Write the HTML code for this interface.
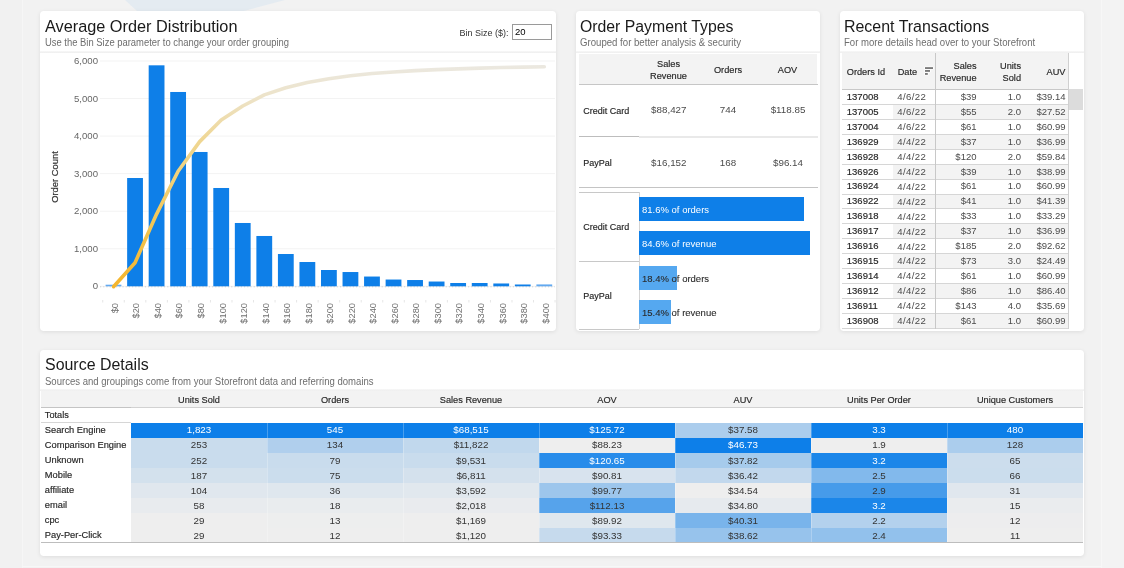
<!DOCTYPE html><html><head><meta charset="utf-8"><style>

*{box-sizing:border-box;margin:0;padding:0}
html,body{width:1124px;height:568px;overflow:hidden;background:#f2f2f2;font-family:"Liberation Sans", sans-serif;}
#w{position:absolute;left:0;top:0;width:1124px;height:568px;will-change:transform}
.a{position:absolute;white-space:nowrap}
.card{position:absolute;background:#fff;border-radius:4px;box-shadow:0 1px 4px rgba(0,0,0,0.09)}
.title{position:absolute;font-size:16px;color:#1a1a1a;line-height:16px;white-space:nowrap}
.sub{position:absolute;font-size:10px;color:#6e6e6e;line-height:10px;white-space:nowrap;transform:scaleX(0.95);transform-origin:0 0}
.sep{position:absolute;height:2px;background:linear-gradient(#f8f8f8,#eeeeee)}

</style></head><body><div id="w">
<svg class="a" style="left:0;top:0" width="1124" height="568"><polygon points="125,0 285,0 244,11 137,11" fill="#e4ebf1"/><rect x="0" y="0" width="22" height="568" fill="#f1f1f1"/><rect x="1102" y="0" width="22" height="568" fill="#f3f3f3"/><rect x="22" y="0" width="1" height="568" fill="#f6f6f6"/><rect x="1101" y="0" width="1" height="568" fill="#f7f7f7"/><rect x="22" y="566" width="1080" height="1" fill="#f7f7f7"/></svg>
<div class="card" style="left:40px;top:11px;width:516px;height:319.7px"></div>
<div class="card" style="left:576px;top:11px;width:244px;height:319.7px"></div>
<div class="card" style="left:840px;top:11px;width:244px;height:319.7px"></div>
<div class="card" style="left:40px;top:349.5px;width:1044px;height:206.2px"></div>
<div class="title" style="left:45px;top:18px;font-size:16.3px">Average Order Distribution</div>
<div class="sub" style="left:45px;top:38px;transform:scaleX(0.942)">Use the Bin Size parameter to change your order grouping</div>
<div class="sep" style="left:40px;top:51px;width:516px"></div>
<div class="title" style="left:580px;top:19px;font-size:15.8px">Order Payment Types</div>
<div class="sub" style="left:580px;top:38px;transform:scaleX(0.962)">Grouped for better analysis &amp; security</div>
<div class="sep" style="left:576px;top:51px;width:244px"></div>
<div class="title" style="left:844px;top:19px;font-size:15.95px">Recent Transactions</div>
<div class="sub" style="left:844px;top:38px;transform:scaleX(0.958)">For more details head over to your Storefront</div>
<div class="sep" style="left:840px;top:51px;width:244px"></div>
<div class="title" style="left:45px;top:357px;font-size:15.95px">Source Details</div>
<div class="sub" style="left:45px;top:376.5px;transform:scaleX(0.955)">Sources and groupings come from your Storefront data and referring domains</div>
<div class="sep" style="left:40px;top:389px;width:1044px"></div>
<div class="a" style="left:459.5px;top:27.5px;font-size:9px;color:#333;line-height:10px">Bin Size ($):</div>
<div class="a" style="left:512px;top:24px;width:40px;height:16px;border:1px solid #9a9a9a;background:#fff;font-size:9.5px;line-height:13px;padding-left:2px;color:#000">20</div>
<svg class="a" style="left:0;top:0" width="1124" height="568"><defs><linearGradient id="lg" gradientUnits="userSpaceOnUse" x1="0" y1="286" x2="0" y2="66"><stop offset="0" stop-color="#f5b52c"/><stop offset="0.25" stop-color="#f3c44f"/><stop offset="0.51" stop-color="#f1d27c"/><stop offset="0.66" stop-color="#efd692"/><stop offset="0.855" stop-color="#ede3c8"/><stop offset="1" stop-color="#ebe8e0"/></linearGradient></defs><rect x="100" y="285.80" width="455" height="1" fill="#f3f3f3"/><text x="98" y="289.30" font-size="9.6" fill="#666" text-anchor="end" font-family="Liberation Sans">0</text><rect x="100" y="248.25" width="455" height="1" fill="#f3f3f3"/><text x="98" y="251.75" font-size="9.6" fill="#666" text-anchor="end" font-family="Liberation Sans">1,000</text><rect x="100" y="210.70" width="455" height="1" fill="#f3f3f3"/><text x="98" y="214.20" font-size="9.6" fill="#666" text-anchor="end" font-family="Liberation Sans">2,000</text><rect x="100" y="173.15" width="455" height="1" fill="#f3f3f3"/><text x="98" y="176.65" font-size="9.6" fill="#666" text-anchor="end" font-family="Liberation Sans">3,000</text><rect x="100" y="135.60" width="455" height="1" fill="#f3f3f3"/><text x="98" y="139.10" font-size="9.6" fill="#666" text-anchor="end" font-family="Liberation Sans">4,000</text><rect x="100" y="98.05" width="455" height="1" fill="#f3f3f3"/><text x="98" y="101.55" font-size="9.6" fill="#666" text-anchor="end" font-family="Liberation Sans">5,000</text><rect x="100" y="60.50" width="455" height="1" fill="#f3f3f3"/><text x="98" y="64.00" font-size="9.6" fill="#666" text-anchor="end" font-family="Liberation Sans">6,000</text><line x1="100" y1="286.8" x2="555" y2="286.8" stroke="#d0d0d0" stroke-width="1" stroke-dasharray="1.2,2"/><rect x="102.23" y="300" width="1" height="2.5" fill="#e6e6e6"/><rect x="123.77" y="300" width="1" height="2.5" fill="#e6e6e6"/><rect x="145.31" y="300" width="1" height="2.5" fill="#e6e6e6"/><rect x="166.85" y="300" width="1" height="2.5" fill="#e6e6e6"/><rect x="188.39" y="300" width="1" height="2.5" fill="#e6e6e6"/><rect x="209.93" y="300" width="1" height="2.5" fill="#e6e6e6"/><rect x="231.47" y="300" width="1" height="2.5" fill="#e6e6e6"/><rect x="253.01" y="300" width="1" height="2.5" fill="#e6e6e6"/><rect x="274.55" y="300" width="1" height="2.5" fill="#e6e6e6"/><rect x="296.09" y="300" width="1" height="2.5" fill="#e6e6e6"/><rect x="317.63" y="300" width="1" height="2.5" fill="#e6e6e6"/><rect x="339.17" y="300" width="1" height="2.5" fill="#e6e6e6"/><rect x="360.71" y="300" width="1" height="2.5" fill="#e6e6e6"/><rect x="382.25" y="300" width="1" height="2.5" fill="#e6e6e6"/><rect x="403.79" y="300" width="1" height="2.5" fill="#e6e6e6"/><rect x="425.33" y="300" width="1" height="2.5" fill="#e6e6e6"/><rect x="446.87" y="300" width="1" height="2.5" fill="#e6e6e6"/><rect x="468.41" y="300" width="1" height="2.5" fill="#e6e6e6"/><rect x="489.95" y="300" width="1" height="2.5" fill="#e6e6e6"/><rect x="511.49" y="300" width="1" height="2.5" fill="#e6e6e6"/><rect x="533.03" y="300" width="1" height="2.5" fill="#e6e6e6"/><rect x="554.57" y="300" width="1" height="2.5" fill="#e6e6e6"/><rect x="105.60" y="284.70" width="15.8" height="1.60" fill="#62a9f0"/><text transform="translate(117.80,303) rotate(-90)" font-size="9.3" fill="#707070" text-anchor="end" font-family="Liberation Sans">$0</text><rect x="127.14" y="178.01" width="15.8" height="108.29" fill="#0e7fe8"/><text transform="translate(139.34,303) rotate(-90)" font-size="9.3" fill="#707070" text-anchor="end" font-family="Liberation Sans">$20</text><rect x="148.68" y="65.32" width="15.8" height="220.98" fill="#0e7fe8"/><text transform="translate(160.88,303) rotate(-90)" font-size="9.3" fill="#707070" text-anchor="end" font-family="Liberation Sans">$40</text><rect x="170.22" y="91.98" width="15.8" height="194.32" fill="#0e7fe8"/><text transform="translate(182.42,303) rotate(-90)" font-size="9.3" fill="#707070" text-anchor="end" font-family="Liberation Sans">$60</text><rect x="191.76" y="151.98" width="15.8" height="134.32" fill="#0e7fe8"/><text transform="translate(203.96,303) rotate(-90)" font-size="9.3" fill="#707070" text-anchor="end" font-family="Liberation Sans">$80</text><rect x="213.30" y="187.99" width="15.8" height="98.31" fill="#0e7fe8"/><text transform="translate(225.50,303) rotate(-90)" font-size="9.3" fill="#707070" text-anchor="end" font-family="Liberation Sans">$100</text><rect x="234.84" y="222.99" width="15.8" height="63.31" fill="#0e7fe8"/><text transform="translate(247.04,303) rotate(-90)" font-size="9.3" fill="#707070" text-anchor="end" font-family="Liberation Sans">$120</text><rect x="256.38" y="235.98" width="15.8" height="50.32" fill="#0e7fe8"/><text transform="translate(268.58,303) rotate(-90)" font-size="9.3" fill="#707070" text-anchor="end" font-family="Liberation Sans">$140</text><rect x="277.92" y="254.01" width="15.8" height="32.29" fill="#0e7fe8"/><text transform="translate(290.12,303) rotate(-90)" font-size="9.3" fill="#707070" text-anchor="end" font-family="Liberation Sans">$160</text><rect x="299.46" y="262.01" width="15.8" height="24.29" fill="#0e7fe8"/><text transform="translate(311.66,303) rotate(-90)" font-size="9.3" fill="#707070" text-anchor="end" font-family="Liberation Sans">$180</text><rect x="321.00" y="270.00" width="15.8" height="16.30" fill="#0e7fe8"/><text transform="translate(333.20,303) rotate(-90)" font-size="9.3" fill="#707070" text-anchor="end" font-family="Liberation Sans">$200</text><rect x="342.54" y="272.03" width="15.8" height="14.27" fill="#0e7fe8"/><text transform="translate(354.74,303) rotate(-90)" font-size="9.3" fill="#707070" text-anchor="end" font-family="Liberation Sans">$220</text><rect x="364.08" y="276.54" width="15.8" height="9.76" fill="#0e7fe8"/><text transform="translate(376.28,303) rotate(-90)" font-size="9.3" fill="#707070" text-anchor="end" font-family="Liberation Sans">$240</text><rect x="385.62" y="279.54" width="15.8" height="6.76" fill="#0e7fe8"/><text transform="translate(397.82,303) rotate(-90)" font-size="9.3" fill="#707070" text-anchor="end" font-family="Liberation Sans">$260</text><rect x="407.16" y="280.03" width="15.8" height="6.27" fill="#0e7fe8"/><text transform="translate(419.36,303) rotate(-90)" font-size="9.3" fill="#707070" text-anchor="end" font-family="Liberation Sans">$280</text><rect x="428.70" y="281.53" width="15.8" height="4.77" fill="#0e7fe8"/><text transform="translate(440.90,303) rotate(-90)" font-size="9.3" fill="#707070" text-anchor="end" font-family="Liberation Sans">$300</text><rect x="450.24" y="283.00" width="15.8" height="3.30" fill="#0e7fe8"/><text transform="translate(462.44,303) rotate(-90)" font-size="9.3" fill="#707070" text-anchor="end" font-family="Liberation Sans">$320</text><rect x="471.78" y="283.00" width="15.8" height="3.30" fill="#0e7fe8"/><text transform="translate(483.98,303) rotate(-90)" font-size="9.3" fill="#707070" text-anchor="end" font-family="Liberation Sans">$340</text><rect x="493.32" y="283.48" width="15.8" height="2.82" fill="#0e7fe8"/><text transform="translate(505.52,303) rotate(-90)" font-size="9.3" fill="#707070" text-anchor="end" font-family="Liberation Sans">$360</text><rect x="514.86" y="284.50" width="15.8" height="1.80" fill="#0e7fe8"/><text transform="translate(527.06,303) rotate(-90)" font-size="9.3" fill="#707070" text-anchor="end" font-family="Liberation Sans">$380</text><rect x="536.40" y="284.42" width="15.8" height="1.88" fill="#62a9f0"/><text transform="translate(548.60,303) rotate(-90)" font-size="9.3" fill="#707070" text-anchor="end" font-family="Liberation Sans">$400</text><polyline points="113.50,286.70 135.04,262.82 156.58,214.09 178.12,171.24 199.66,141.62 221.20,119.94 242.74,105.98 264.28,94.89 285.82,87.77 307.36,82.41 328.90,78.81 350.44,75.67 371.98,73.51 393.52,72.02 415.06,70.64 436.60,69.59 458.14,68.86 479.68,68.13 501.22,67.51 522.76,67.11 544.30,66.70" fill="none" stroke="url(#lg)" stroke-width="3.6" stroke-linejoin="round" stroke-linecap="round"/><text transform="translate(57.5,177) rotate(-90)" font-size="9.4" fill="#333" stroke="#333" stroke-width="0.2" text-anchor="middle" font-family="Liberation Sans">Order Count</text></svg>
<div class="a" style="left:579px;top:54px;width:237.8px;height:30px;background:#f3f3f3;"></div>
<div class="a" style="left:579px;top:84px;width:238.5px;height:1px;background:#c6c6c6;"></div>
<div class="a" style="left:608.5px;width:120px;text-align:center;top:58px;line-height:12px;font-size:9.2px;color:#222;-webkit-text-stroke:0.17px #333;">Sales</div>
<div class="a" style="left:608.5px;width:120px;text-align:center;top:69.7px;line-height:12px;font-size:9.2px;color:#222;-webkit-text-stroke:0.17px #333;">Revenue</div>
<div class="a" style="left:668px;width:120px;text-align:center;top:63.8px;line-height:12px;font-size:9.2px;color:#222;-webkit-text-stroke:0.17px #333;">Orders</div>
<div class="a" style="left:727.5px;width:120px;text-align:center;top:63.8px;line-height:12px;font-size:9.2px;color:#222;-webkit-text-stroke:0.17px #333;">AOV</div>
<div class="a" style="left:583.3px;top:104.6px;line-height:12px;font-size:9.0px;color:#222;-webkit-text-stroke:0.17px #333;">Credit Card</div>
<div class="a" style="left:608.8px;width:120px;text-align:center;top:104.3px;line-height:12px;font-size:9.8px;color:#4a4a4a;">$88,427</div>
<div class="a" style="left:668px;width:120px;text-align:center;top:104.3px;line-height:12px;font-size:9.8px;color:#4a4a4a;">744</div>
<div class="a" style="left:728px;width:120px;text-align:center;top:104.3px;line-height:12px;font-size:9.8px;color:#4a4a4a;">$118.85</div>
<div class="a" style="left:579px;top:136px;width:60px;height:1px;background:#bdbdbd;"></div>
<div class="a" style="left:639px;top:136px;width:178.5px;height:1.5px;background:#e9e9e9;"></div>
<div class="a" style="left:583.3px;top:157px;line-height:12px;font-size:9.0px;color:#222;-webkit-text-stroke:0.17px #333;">PayPal</div>
<div class="a" style="left:608.8px;width:120px;text-align:center;top:156.7px;line-height:12px;font-size:9.8px;color:#4a4a4a;">$16,152</div>
<div class="a" style="left:668px;width:120px;text-align:center;top:156.7px;line-height:12px;font-size:9.8px;color:#4a4a4a;">168</div>
<div class="a" style="left:728px;width:120px;text-align:center;top:156.7px;line-height:12px;font-size:9.8px;color:#4a4a4a;">$96.14</div>
<div class="a" style="left:579px;top:187px;width:238.5px;height:1px;background:#c4c4c4;"></div>
<div class="a" style="left:579px;top:192.3px;width:60px;height:1px;background:#c8c8c8;"></div>
<div class="a" style="left:639px;top:192.3px;width:1px;height:137px;background:#d4d4d4;"></div>
<div class="a" style="left:579px;top:260.8px;width:60px;height:1px;background:#c8c8c8;"></div>
<div class="a" style="left:579px;top:329px;width:60px;height:1px;background:#c8c8c8;"></div>
<div class="a" style="left:583.3px;top:220.6px;line-height:12px;font-size:9.0px;color:#222;-webkit-text-stroke:0.17px #333;">Credit Card</div>
<div class="a" style="left:583.3px;top:289.6px;line-height:12px;font-size:9.0px;color:#222;-webkit-text-stroke:0.17px #333;">PayPal</div>
<div class="a" style="left:639px;top:197.2px;width:165px;height:23.8px;background:#0e7fe8;"></div>
<div class="a" style="left:639px;top:231.3px;width:171px;height:23.8px;background:#0e7fe8;"></div>
<div class="a" style="left:639px;top:266px;width:37.5px;height:23.8px;background:#55a8f0;"></div>
<div class="a" style="left:639px;top:300.1px;width:31.6px;height:23.8px;background:#55a8f0;"></div>
<div class="a" style="left:642px;top:204.2px;line-height:12px;font-size:9.5px;color:#fff;">81.6% of orders</div>
<div class="a" style="left:642px;top:238.2px;line-height:12px;font-size:9.5px;color:#fff;">84.6% of revenue</div>
<div class="a" style="left:642px;top:272.9px;line-height:12px;font-size:9.5px;color:#2a2a2a;-webkit-text-stroke:0.1px #2a2a2a;">18.4% of orders</div>
<div class="a" style="left:642px;top:307px;line-height:12px;font-size:9.5px;color:#2a2a2a;-webkit-text-stroke:0.1px #2a2a2a;">15.4% of revenue</div>
<div class="a" style="left:842px;top:53px;width:226.5px;height:36.5px;background:#f3f3f3;"></div>
<div class="a" style="left:842px;top:89px;width:226.5px;height:1px;background:#c8c8c8;"></div>
<div class="a" style="left:935.2px;top:53px;width:1px;height:276px;background:#c8c8c8;"></div>
<div class="a" style="left:1067.5px;top:53px;width:1px;height:276px;background:#d0d0d0;"></div>
<div class="a" style="left:846.8px;top:66px;line-height:12px;font-size:9.2px;color:#222;-webkit-text-stroke:0.17px #333;">Orders Id</div>
<div class="a" style="left:897.7px;top:66px;line-height:12px;font-size:9.2px;color:#222;-webkit-text-stroke:0.17px #333;">Date</div>
<svg class="a" style="left:923px;top:65px" width="12" height="12"><g stroke="#fff" stroke-width="1.6" stroke-linejoin="round" fill="#fff" opacity="0.9"><rect x="2" y="2.3" width="8" height="1.5"/><rect x="2" y="5.2" width="5" height="1.5"/><rect x="2" y="8.2" width="2.8" height="1.5"/></g><rect x="2" y="2.3" width="8" height="1.5" fill="#5a5a5a"/><rect x="2" y="5.2" width="5" height="1.5" fill="#5a5a5a"/><rect x="2" y="8.2" width="2.8" height="1.5" fill="#5a5a5a"/></svg>
<div class="a" style="left:856.5px;width:120px;text-align:right;top:59.900000000000006px;line-height:12px;font-size:9.2px;color:#222;-webkit-text-stroke:0.17px #333;">Sales</div>
<div class="a" style="left:856.5px;width:120px;text-align:right;top:71.9px;line-height:12px;font-size:9.2px;color:#222;-webkit-text-stroke:0.17px #333;">Revenue</div>
<div class="a" style="left:901px;width:120px;text-align:right;top:59.900000000000006px;line-height:12px;font-size:9.2px;color:#222;-webkit-text-stroke:0.17px #333;">Units</div>
<div class="a" style="left:901px;width:120px;text-align:right;top:71.9px;line-height:12px;font-size:9.2px;color:#222;-webkit-text-stroke:0.17px #333;">Sold</div>
<div class="a" style="left:945.5px;width:120px;text-align:right;top:66px;line-height:12px;font-size:9.2px;color:#222;-webkit-text-stroke:0.17px #333;">AUV</div>
<div class="a" style="left:1068.8px;top:89.3px;width:14.2px;height:20.7px;background:#dcdcdc;"></div>
<div class="a" style="left:893px;top:104.43px;width:174.5px;height:14.93px;background:#f3f3f3;"></div>
<div class="a" style="left:893px;top:134.29px;width:174.5px;height:14.93px;background:#f3f3f3;"></div>
<div class="a" style="left:893px;top:164.15px;width:174.5px;height:14.93px;background:#f3f3f3;"></div>
<div class="a" style="left:893px;top:194.01px;width:174.5px;height:14.93px;background:#f3f3f3;"></div>
<div class="a" style="left:893px;top:223.87px;width:174.5px;height:14.93px;background:#f3f3f3;"></div>
<div class="a" style="left:893px;top:253.73px;width:174.5px;height:14.93px;background:#f3f3f3;"></div>
<div class="a" style="left:893px;top:283.59000000000003px;width:174.5px;height:14.93px;background:#f3f3f3;"></div>
<div class="a" style="left:893px;top:313.45px;width:174.5px;height:14.93px;background:#f3f3f3;"></div>
<div class="a" style="left:842px;top:103.93px;width:225.5px;height:1px;background:#d6d6d6;"></div>
<div class="a" style="left:842px;top:118.86000000000001px;width:225.5px;height:1px;background:#d6d6d6;"></div>
<div class="a" style="left:842px;top:133.79px;width:225.5px;height:1px;background:#d6d6d6;"></div>
<div class="a" style="left:842px;top:148.72px;width:225.5px;height:1px;background:#d6d6d6;"></div>
<div class="a" style="left:842px;top:163.65px;width:225.5px;height:1px;background:#d6d6d6;"></div>
<div class="a" style="left:842px;top:178.58px;width:225.5px;height:1px;background:#d6d6d6;"></div>
<div class="a" style="left:842px;top:193.51px;width:225.5px;height:1px;background:#d6d6d6;"></div>
<div class="a" style="left:842px;top:208.44px;width:225.5px;height:1px;background:#d6d6d6;"></div>
<div class="a" style="left:842px;top:223.37px;width:225.5px;height:1px;background:#d6d6d6;"></div>
<div class="a" style="left:842px;top:238.3px;width:225.5px;height:1px;background:#d6d6d6;"></div>
<div class="a" style="left:842px;top:253.23000000000002px;width:225.5px;height:1px;background:#d6d6d6;"></div>
<div class="a" style="left:842px;top:268.15999999999997px;width:225.5px;height:1px;background:#d6d6d6;"></div>
<div class="a" style="left:842px;top:283.09px;width:225.5px;height:1px;background:#d6d6d6;"></div>
<div class="a" style="left:842px;top:298.02000000000004px;width:225.5px;height:1px;background:#d6d6d6;"></div>
<div class="a" style="left:842px;top:312.95px;width:225.5px;height:1px;background:#d6d6d6;"></div>
<div class="a" style="left:842px;top:327.88px;width:225.5px;height:1px;background:#d6d6d6;"></div>
<div class="a" style="left:935.2px;top:53px;width:1px;height:276px;background:#c8c8c8;"></div>
<div class="a" style="left:1067.5px;top:53px;width:1px;height:276px;background:#d0d0d0;"></div>
<div class="a" style="left:846.8px;top:90.9px;line-height:12px;font-size:9.5px;color:#1a1a1a;-webkit-text-stroke:0.17px #333;">137008</div>
<div class="a" style="left:897.3px;top:91.2px;line-height:12px;font-size:9.6px;color:#4a4a4a;letter-spacing:0.35px;">4/6/22</div>
<div class="a" style="left:856.5px;width:120px;text-align:right;top:90.9px;line-height:12px;font-size:9.5px;color:#4a4a4a;">$39</div>
<div class="a" style="left:901px;width:120px;text-align:right;top:90.9px;line-height:12px;font-size:9.5px;color:#4a4a4a;">1.0</div>
<div class="a" style="left:945.5px;width:120px;text-align:right;top:90.9px;line-height:12px;font-size:9.5px;color:#4a4a4a;">$39.14</div>
<div class="a" style="left:846.8px;top:105.83000000000001px;line-height:12px;font-size:9.5px;color:#1a1a1a;-webkit-text-stroke:0.17px #333;">137005</div>
<div class="a" style="left:897.3px;top:106.13000000000001px;line-height:12px;font-size:9.6px;color:#4a4a4a;letter-spacing:0.35px;">4/6/22</div>
<div class="a" style="left:856.5px;width:120px;text-align:right;top:105.83000000000001px;line-height:12px;font-size:9.5px;color:#4a4a4a;">$55</div>
<div class="a" style="left:901px;width:120px;text-align:right;top:105.83000000000001px;line-height:12px;font-size:9.5px;color:#4a4a4a;">2.0</div>
<div class="a" style="left:945.5px;width:120px;text-align:right;top:105.83000000000001px;line-height:12px;font-size:9.5px;color:#4a4a4a;">$27.52</div>
<div class="a" style="left:846.8px;top:120.76px;line-height:12px;font-size:9.5px;color:#1a1a1a;-webkit-text-stroke:0.17px #333;">137004</div>
<div class="a" style="left:897.3px;top:121.06px;line-height:12px;font-size:9.6px;color:#4a4a4a;letter-spacing:0.35px;">4/6/22</div>
<div class="a" style="left:856.5px;width:120px;text-align:right;top:120.76px;line-height:12px;font-size:9.5px;color:#4a4a4a;">$61</div>
<div class="a" style="left:901px;width:120px;text-align:right;top:120.76px;line-height:12px;font-size:9.5px;color:#4a4a4a;">1.0</div>
<div class="a" style="left:945.5px;width:120px;text-align:right;top:120.76px;line-height:12px;font-size:9.5px;color:#4a4a4a;">$60.99</div>
<div class="a" style="left:846.8px;top:135.69px;line-height:12px;font-size:9.5px;color:#1a1a1a;-webkit-text-stroke:0.17px #333;">136929</div>
<div class="a" style="left:897.3px;top:135.99px;line-height:12px;font-size:9.6px;color:#4a4a4a;letter-spacing:0.35px;">4/4/22</div>
<div class="a" style="left:856.5px;width:120px;text-align:right;top:135.69px;line-height:12px;font-size:9.5px;color:#4a4a4a;">$37</div>
<div class="a" style="left:901px;width:120px;text-align:right;top:135.69px;line-height:12px;font-size:9.5px;color:#4a4a4a;">1.0</div>
<div class="a" style="left:945.5px;width:120px;text-align:right;top:135.69px;line-height:12px;font-size:9.5px;color:#4a4a4a;">$36.99</div>
<div class="a" style="left:846.8px;top:150.62px;line-height:12px;font-size:9.5px;color:#1a1a1a;-webkit-text-stroke:0.17px #333;">136928</div>
<div class="a" style="left:897.3px;top:150.92000000000002px;line-height:12px;font-size:9.6px;color:#4a4a4a;letter-spacing:0.35px;">4/4/22</div>
<div class="a" style="left:856.5px;width:120px;text-align:right;top:150.62px;line-height:12px;font-size:9.5px;color:#4a4a4a;">$120</div>
<div class="a" style="left:901px;width:120px;text-align:right;top:150.62px;line-height:12px;font-size:9.5px;color:#4a4a4a;">2.0</div>
<div class="a" style="left:945.5px;width:120px;text-align:right;top:150.62px;line-height:12px;font-size:9.5px;color:#4a4a4a;">$59.84</div>
<div class="a" style="left:846.8px;top:165.55px;line-height:12px;font-size:9.5px;color:#1a1a1a;-webkit-text-stroke:0.17px #333;">136926</div>
<div class="a" style="left:897.3px;top:165.85000000000002px;line-height:12px;font-size:9.6px;color:#4a4a4a;letter-spacing:0.35px;">4/4/22</div>
<div class="a" style="left:856.5px;width:120px;text-align:right;top:165.55px;line-height:12px;font-size:9.5px;color:#4a4a4a;">$39</div>
<div class="a" style="left:901px;width:120px;text-align:right;top:165.55px;line-height:12px;font-size:9.5px;color:#4a4a4a;">1.0</div>
<div class="a" style="left:945.5px;width:120px;text-align:right;top:165.55px;line-height:12px;font-size:9.5px;color:#4a4a4a;">$38.99</div>
<div class="a" style="left:846.8px;top:180.48px;line-height:12px;font-size:9.5px;color:#1a1a1a;-webkit-text-stroke:0.17px #333;">136924</div>
<div class="a" style="left:897.3px;top:180.78px;line-height:12px;font-size:9.6px;color:#4a4a4a;letter-spacing:0.35px;">4/4/22</div>
<div class="a" style="left:856.5px;width:120px;text-align:right;top:180.48px;line-height:12px;font-size:9.5px;color:#4a4a4a;">$61</div>
<div class="a" style="left:901px;width:120px;text-align:right;top:180.48px;line-height:12px;font-size:9.5px;color:#4a4a4a;">1.0</div>
<div class="a" style="left:945.5px;width:120px;text-align:right;top:180.48px;line-height:12px;font-size:9.5px;color:#4a4a4a;">$60.99</div>
<div class="a" style="left:846.8px;top:195.41px;line-height:12px;font-size:9.5px;color:#1a1a1a;-webkit-text-stroke:0.17px #333;">136922</div>
<div class="a" style="left:897.3px;top:195.71px;line-height:12px;font-size:9.6px;color:#4a4a4a;letter-spacing:0.35px;">4/4/22</div>
<div class="a" style="left:856.5px;width:120px;text-align:right;top:195.41px;line-height:12px;font-size:9.5px;color:#4a4a4a;">$41</div>
<div class="a" style="left:901px;width:120px;text-align:right;top:195.41px;line-height:12px;font-size:9.5px;color:#4a4a4a;">1.0</div>
<div class="a" style="left:945.5px;width:120px;text-align:right;top:195.41px;line-height:12px;font-size:9.5px;color:#4a4a4a;">$41.39</div>
<div class="a" style="left:846.8px;top:210.34px;line-height:12px;font-size:9.5px;color:#1a1a1a;-webkit-text-stroke:0.17px #333;">136918</div>
<div class="a" style="left:897.3px;top:210.64000000000001px;line-height:12px;font-size:9.6px;color:#4a4a4a;letter-spacing:0.35px;">4/4/22</div>
<div class="a" style="left:856.5px;width:120px;text-align:right;top:210.34px;line-height:12px;font-size:9.5px;color:#4a4a4a;">$33</div>
<div class="a" style="left:901px;width:120px;text-align:right;top:210.34px;line-height:12px;font-size:9.5px;color:#4a4a4a;">1.0</div>
<div class="a" style="left:945.5px;width:120px;text-align:right;top:210.34px;line-height:12px;font-size:9.5px;color:#4a4a4a;">$33.29</div>
<div class="a" style="left:846.8px;top:225.27px;line-height:12px;font-size:9.5px;color:#1a1a1a;-webkit-text-stroke:0.17px #333;">136917</div>
<div class="a" style="left:897.3px;top:225.57000000000002px;line-height:12px;font-size:9.6px;color:#4a4a4a;letter-spacing:0.35px;">4/4/22</div>
<div class="a" style="left:856.5px;width:120px;text-align:right;top:225.27px;line-height:12px;font-size:9.5px;color:#4a4a4a;">$37</div>
<div class="a" style="left:901px;width:120px;text-align:right;top:225.27px;line-height:12px;font-size:9.5px;color:#4a4a4a;">1.0</div>
<div class="a" style="left:945.5px;width:120px;text-align:right;top:225.27px;line-height:12px;font-size:9.5px;color:#4a4a4a;">$36.99</div>
<div class="a" style="left:846.8px;top:240.20000000000002px;line-height:12px;font-size:9.5px;color:#1a1a1a;-webkit-text-stroke:0.17px #333;">136916</div>
<div class="a" style="left:897.3px;top:240.50000000000003px;line-height:12px;font-size:9.6px;color:#4a4a4a;letter-spacing:0.35px;">4/4/22</div>
<div class="a" style="left:856.5px;width:120px;text-align:right;top:240.20000000000002px;line-height:12px;font-size:9.5px;color:#4a4a4a;">$185</div>
<div class="a" style="left:901px;width:120px;text-align:right;top:240.20000000000002px;line-height:12px;font-size:9.5px;color:#4a4a4a;">2.0</div>
<div class="a" style="left:945.5px;width:120px;text-align:right;top:240.20000000000002px;line-height:12px;font-size:9.5px;color:#4a4a4a;">$92.62</div>
<div class="a" style="left:846.8px;top:255.13px;line-height:12px;font-size:9.5px;color:#1a1a1a;-webkit-text-stroke:0.17px #333;">136915</div>
<div class="a" style="left:897.3px;top:255.43px;line-height:12px;font-size:9.6px;color:#4a4a4a;letter-spacing:0.35px;">4/4/22</div>
<div class="a" style="left:856.5px;width:120px;text-align:right;top:255.13px;line-height:12px;font-size:9.5px;color:#4a4a4a;">$73</div>
<div class="a" style="left:901px;width:120px;text-align:right;top:255.13px;line-height:12px;font-size:9.5px;color:#4a4a4a;">3.0</div>
<div class="a" style="left:945.5px;width:120px;text-align:right;top:255.13px;line-height:12px;font-size:9.5px;color:#4a4a4a;">$24.49</div>
<div class="a" style="left:846.8px;top:270.05999999999995px;line-height:12px;font-size:9.5px;color:#1a1a1a;-webkit-text-stroke:0.17px #333;">136914</div>
<div class="a" style="left:897.3px;top:270.35999999999996px;line-height:12px;font-size:9.6px;color:#4a4a4a;letter-spacing:0.35px;">4/4/22</div>
<div class="a" style="left:856.5px;width:120px;text-align:right;top:270.05999999999995px;line-height:12px;font-size:9.5px;color:#4a4a4a;">$61</div>
<div class="a" style="left:901px;width:120px;text-align:right;top:270.05999999999995px;line-height:12px;font-size:9.5px;color:#4a4a4a;">1.0</div>
<div class="a" style="left:945.5px;width:120px;text-align:right;top:270.05999999999995px;line-height:12px;font-size:9.5px;color:#4a4a4a;">$60.99</div>
<div class="a" style="left:846.8px;top:284.99px;line-height:12px;font-size:9.5px;color:#1a1a1a;-webkit-text-stroke:0.17px #333;">136912</div>
<div class="a" style="left:897.3px;top:285.29px;line-height:12px;font-size:9.6px;color:#4a4a4a;letter-spacing:0.35px;">4/4/22</div>
<div class="a" style="left:856.5px;width:120px;text-align:right;top:284.99px;line-height:12px;font-size:9.5px;color:#4a4a4a;">$86</div>
<div class="a" style="left:901px;width:120px;text-align:right;top:284.99px;line-height:12px;font-size:9.5px;color:#4a4a4a;">1.0</div>
<div class="a" style="left:945.5px;width:120px;text-align:right;top:284.99px;line-height:12px;font-size:9.5px;color:#4a4a4a;">$86.40</div>
<div class="a" style="left:846.8px;top:299.91999999999996px;line-height:12px;font-size:9.5px;color:#1a1a1a;-webkit-text-stroke:0.17px #333;">136911</div>
<div class="a" style="left:897.3px;top:300.21999999999997px;line-height:12px;font-size:9.6px;color:#4a4a4a;letter-spacing:0.35px;">4/4/22</div>
<div class="a" style="left:856.5px;width:120px;text-align:right;top:299.91999999999996px;line-height:12px;font-size:9.5px;color:#4a4a4a;">$143</div>
<div class="a" style="left:901px;width:120px;text-align:right;top:299.91999999999996px;line-height:12px;font-size:9.5px;color:#4a4a4a;">4.0</div>
<div class="a" style="left:945.5px;width:120px;text-align:right;top:299.91999999999996px;line-height:12px;font-size:9.5px;color:#4a4a4a;">$35.69</div>
<div class="a" style="left:846.8px;top:314.84999999999997px;line-height:12px;font-size:9.5px;color:#1a1a1a;-webkit-text-stroke:0.17px #333;">136908</div>
<div class="a" style="left:897.3px;top:315.15px;line-height:12px;font-size:9.6px;color:#4a4a4a;letter-spacing:0.35px;">4/4/22</div>
<div class="a" style="left:856.5px;width:120px;text-align:right;top:314.84999999999997px;line-height:12px;font-size:9.5px;color:#4a4a4a;">$61</div>
<div class="a" style="left:901px;width:120px;text-align:right;top:314.84999999999997px;line-height:12px;font-size:9.5px;color:#4a4a4a;">1.0</div>
<div class="a" style="left:945.5px;width:120px;text-align:right;top:314.84999999999997px;line-height:12px;font-size:9.5px;color:#4a4a4a;">$60.99</div>
<div class="a" style="left:41px;top:391px;width:1042px;height:16px;background:#f3f3f3;"></div>
<div class="a" style="left:41px;top:407px;width:90px;height:1px;background:#c4c4c4;"></div>
<div class="a" style="left:131px;top:407px;width:952px;height:1px;background:#d2d2d2;"></div>
<div class="a" style="left:139px;width:120px;text-align:center;top:393.6px;line-height:12px;font-size:9.2px;color:#222;-webkit-text-stroke:0.17px #333;">Units Sold</div>
<div class="a" style="left:275px;width:120px;text-align:center;top:393.6px;line-height:12px;font-size:9.2px;color:#222;-webkit-text-stroke:0.17px #333;">Orders</div>
<div class="a" style="left:411px;width:120px;text-align:center;top:393.6px;line-height:12px;font-size:9.2px;color:#222;-webkit-text-stroke:0.17px #333;">Sales Revenue</div>
<div class="a" style="left:547px;width:120px;text-align:center;top:393.6px;line-height:12px;font-size:9.2px;color:#222;-webkit-text-stroke:0.17px #333;">AOV</div>
<div class="a" style="left:683px;width:120px;text-align:center;top:393.6px;line-height:12px;font-size:9.2px;color:#222;-webkit-text-stroke:0.17px #333;">AUV</div>
<div class="a" style="left:819px;width:120px;text-align:center;top:393.6px;line-height:12px;font-size:9.2px;color:#222;-webkit-text-stroke:0.17px #333;">Units Per Order</div>
<div class="a" style="left:955px;width:120px;text-align:center;top:393.6px;line-height:12px;font-size:9.2px;color:#222;-webkit-text-stroke:0.17px #333;">Unique Customers</div>
<div class="a" style="left:44.8px;top:408.7px;line-height:12px;font-size:9.2px;color:#222;-webkit-text-stroke:0.17px #333;">Totals</div>
<div class="a" style="left:41px;top:422px;width:90px;height:1px;background:#d6d6d6;"></div>
<div class="a" style="left:131px;top:422.5px;width:136px;height:15.05px;background:#0d7fe9;"></div>
<div class="a" style="left:131px;top:437.55px;width:136px;height:15.05px;background:#c9dced;"></div>
<div class="a" style="left:131px;top:452.6px;width:136px;height:15.05px;background:#c9dced;"></div>
<div class="a" style="left:131px;top:467.65px;width:136px;height:15.05px;background:#d3e1ed;"></div>
<div class="a" style="left:131px;top:482.7px;width:136px;height:15.05px;background:#e0e7ee;"></div>
<div class="a" style="left:131px;top:497.75px;width:136px;height:15.05px;background:#e8ebee;"></div>
<div class="a" style="left:131px;top:512.8px;width:136px;height:15.05px;background:#eeeeee;"></div>
<div class="a" style="left:131px;top:527.85px;width:136px;height:15.05px;background:#eeeeee;"></div>
<div class="a" style="left:267px;top:422.5px;width:136px;height:15.05px;background:#0d7fe9;"></div>
<div class="a" style="left:267px;top:437.55px;width:136px;height:15.05px;background:#b0cfed;"></div>
<div class="a" style="left:267px;top:452.6px;width:136px;height:15.05px;background:#c9dced;"></div>
<div class="a" style="left:267px;top:467.65px;width:136px;height:15.05px;background:#cbdded;"></div>
<div class="a" style="left:267px;top:482.7px;width:136px;height:15.05px;background:#dfe7ee;"></div>
<div class="a" style="left:267px;top:497.75px;width:136px;height:15.05px;background:#e9ecee;"></div>
<div class="a" style="left:267px;top:512.8px;width:136px;height:15.05px;background:#edeeee;"></div>
<div class="a" style="left:267px;top:527.85px;width:136px;height:15.05px;background:#eeeeee;"></div>
<div class="a" style="left:403px;top:422.5px;width:136px;height:15.05px;background:#0d7fe9;"></div>
<div class="a" style="left:403px;top:437.55px;width:136px;height:15.05px;background:#c1d8ed;"></div>
<div class="a" style="left:403px;top:452.6px;width:136px;height:15.05px;background:#c9dced;"></div>
<div class="a" style="left:403px;top:467.65px;width:136px;height:15.05px;background:#d4e1ed;"></div>
<div class="a" style="left:403px;top:482.7px;width:136px;height:15.05px;background:#e1e8ee;"></div>
<div class="a" style="left:403px;top:497.75px;width:136px;height:15.05px;background:#e9ebee;"></div>
<div class="a" style="left:403px;top:512.8px;width:136px;height:15.05px;background:#eeeeee;"></div>
<div class="a" style="left:403px;top:527.85px;width:136px;height:15.05px;background:#eeeeee;"></div>
<div class="a" style="left:539px;top:422.5px;width:136px;height:15.05px;background:#0d7fe9;"></div>
<div class="a" style="left:539px;top:437.55px;width:136px;height:15.05px;background:#eeeeee;"></div>
<div class="a" style="left:539px;top:452.6px;width:136px;height:15.05px;background:#288cea;"></div>
<div class="a" style="left:539px;top:467.65px;width:136px;height:15.05px;background:#d8e3ee;"></div>
<div class="a" style="left:539px;top:482.7px;width:136px;height:15.05px;background:#9dc6ec;"></div>
<div class="a" style="left:539px;top:497.75px;width:136px;height:15.05px;background:#56a3eb;"></div>
<div class="a" style="left:539px;top:512.8px;width:136px;height:15.05px;background:#dfe7ee;"></div>
<div class="a" style="left:539px;top:527.85px;width:136px;height:15.05px;background:#c6daed;"></div>
<div class="a" style="left:675px;top:422.5px;width:136px;height:15.05px;background:#abcded;"></div>
<div class="a" style="left:675px;top:437.55px;width:136px;height:15.05px;background:#0d7fe9;"></div>
<div class="a" style="left:675px;top:452.6px;width:136px;height:15.05px;background:#a6cbec;"></div>
<div class="a" style="left:675px;top:467.65px;width:136px;height:15.05px;background:#c2d8ed;"></div>
<div class="a" style="left:675px;top:482.7px;width:136px;height:15.05px;background:#eeeeee;"></div>
<div class="a" style="left:675px;top:497.75px;width:136px;height:15.05px;background:#e6eaee;"></div>
<div class="a" style="left:675px;top:512.8px;width:136px;height:15.05px;background:#79b4eb;"></div>
<div class="a" style="left:675px;top:527.85px;width:136px;height:15.05px;background:#97c3ec;"></div>
<div class="a" style="left:811px;top:422.5px;width:136px;height:15.05px;background:#0d7fe9;"></div>
<div class="a" style="left:811px;top:437.55px;width:136px;height:15.05px;background:#eeeeee;"></div>
<div class="a" style="left:811px;top:452.6px;width:136px;height:15.05px;background:#1b86e9;"></div>
<div class="a" style="left:811px;top:467.65px;width:136px;height:15.05px;background:#82b9ec;"></div>
<div class="a" style="left:811px;top:482.7px;width:136px;height:15.05px;background:#469bea;"></div>
<div class="a" style="left:811px;top:497.75px;width:136px;height:15.05px;background:#1b86e9;"></div>
<div class="a" style="left:811px;top:512.8px;width:136px;height:15.05px;background:#b3d1ed;"></div>
<div class="a" style="left:811px;top:527.85px;width:136px;height:15.05px;background:#92c1ec;"></div>
<div class="a" style="left:947px;top:422.5px;width:136px;height:15.05px;background:#0d7fe9;"></div>
<div class="a" style="left:947px;top:437.55px;width:136px;height:15.05px;background:#abcded;"></div>
<div class="a" style="left:947px;top:452.6px;width:136px;height:15.05px;background:#ccdded;"></div>
<div class="a" style="left:947px;top:467.65px;width:136px;height:15.05px;background:#cbdded;"></div>
<div class="a" style="left:947px;top:482.7px;width:136px;height:15.05px;background:#e0e7ee;"></div>
<div class="a" style="left:947px;top:497.75px;width:136px;height:15.05px;background:#eaecee;"></div>
<div class="a" style="left:947px;top:512.8px;width:136px;height:15.05px;background:#ededee;"></div>
<div class="a" style="left:947px;top:527.85px;width:136px;height:15.05px;background:#eeeeee;"></div>
<div class="a" style="left:267px;top:422.4px;width:1px;height:120px;background:rgba(255,255,255,0.25);"></div>
<div class="a" style="left:403px;top:422.4px;width:1px;height:120px;background:rgba(255,255,255,0.25);"></div>
<div class="a" style="left:539px;top:422.4px;width:1px;height:120px;background:rgba(255,255,255,0.25);"></div>
<div class="a" style="left:675px;top:422.4px;width:1px;height:120px;background:rgba(255,255,255,0.25);"></div>
<div class="a" style="left:811px;top:422.4px;width:1px;height:120px;background:rgba(255,255,255,0.25);"></div>
<div class="a" style="left:947px;top:422.4px;width:1px;height:120px;background:rgba(255,255,255,0.25);"></div>
<div class="a" style="left:41px;top:542px;width:1042px;height:1px;background:#bdbdbd;"></div>
<div class="a" style="left:44.8px;top:423.9px;line-height:12px;font-size:9.3px;color:#222;-webkit-text-stroke:0.17px #333;">Search Engine</div>
<div class="a" style="left:44.8px;top:438.95px;line-height:12px;font-size:9.3px;color:#222;-webkit-text-stroke:0.17px #333;">Comparison Engine</div>
<div class="a" style="left:44.8px;top:454.0px;line-height:12px;font-size:9.3px;color:#222;-webkit-text-stroke:0.17px #333;">Unknown</div>
<div class="a" style="left:44.8px;top:469.04999999999995px;line-height:12px;font-size:9.3px;color:#222;-webkit-text-stroke:0.17px #333;">Mobile</div>
<div class="a" style="left:44.8px;top:484.09999999999997px;line-height:12px;font-size:9.3px;color:#222;-webkit-text-stroke:0.17px #333;">affiliate</div>
<div class="a" style="left:44.8px;top:499.15px;line-height:12px;font-size:9.3px;color:#222;-webkit-text-stroke:0.17px #333;">email</div>
<div class="a" style="left:44.8px;top:514.2px;line-height:12px;font-size:9.3px;color:#222;-webkit-text-stroke:0.17px #333;">cpc</div>
<div class="a" style="left:44.8px;top:529.25px;line-height:12px;font-size:9.3px;color:#222;-webkit-text-stroke:0.17px #333;">Pay-Per-Click</div>
<div class="a" style="left:139px;width:120px;text-align:center;top:424.4px;line-height:12px;font-size:9.8px;color:#fff;">1,823</div>
<div class="a" style="left:139px;width:120px;text-align:center;top:439.45px;line-height:12px;font-size:9.8px;color:#333;">253</div>
<div class="a" style="left:139px;width:120px;text-align:center;top:454.5px;line-height:12px;font-size:9.8px;color:#333;">252</div>
<div class="a" style="left:139px;width:120px;text-align:center;top:469.54999999999995px;line-height:12px;font-size:9.8px;color:#333;">187</div>
<div class="a" style="left:139px;width:120px;text-align:center;top:484.59999999999997px;line-height:12px;font-size:9.8px;color:#333;">104</div>
<div class="a" style="left:139px;width:120px;text-align:center;top:499.65px;line-height:12px;font-size:9.8px;color:#333;">58</div>
<div class="a" style="left:139px;width:120px;text-align:center;top:514.7px;line-height:12px;font-size:9.8px;color:#333;">29</div>
<div class="a" style="left:139px;width:120px;text-align:center;top:529.75px;line-height:12px;font-size:9.8px;color:#333;">29</div>
<div class="a" style="left:275px;width:120px;text-align:center;top:424.4px;line-height:12px;font-size:9.8px;color:#fff;">545</div>
<div class="a" style="left:275px;width:120px;text-align:center;top:439.45px;line-height:12px;font-size:9.8px;color:#333;">134</div>
<div class="a" style="left:275px;width:120px;text-align:center;top:454.5px;line-height:12px;font-size:9.8px;color:#333;">79</div>
<div class="a" style="left:275px;width:120px;text-align:center;top:469.54999999999995px;line-height:12px;font-size:9.8px;color:#333;">75</div>
<div class="a" style="left:275px;width:120px;text-align:center;top:484.59999999999997px;line-height:12px;font-size:9.8px;color:#333;">36</div>
<div class="a" style="left:275px;width:120px;text-align:center;top:499.65px;line-height:12px;font-size:9.8px;color:#333;">18</div>
<div class="a" style="left:275px;width:120px;text-align:center;top:514.7px;line-height:12px;font-size:9.8px;color:#333;">13</div>
<div class="a" style="left:275px;width:120px;text-align:center;top:529.75px;line-height:12px;font-size:9.8px;color:#333;">12</div>
<div class="a" style="left:411px;width:120px;text-align:center;top:424.4px;line-height:12px;font-size:9.8px;color:#fff;">$68,515</div>
<div class="a" style="left:411px;width:120px;text-align:center;top:439.45px;line-height:12px;font-size:9.8px;color:#333;">$11,822</div>
<div class="a" style="left:411px;width:120px;text-align:center;top:454.5px;line-height:12px;font-size:9.8px;color:#333;">$9,531</div>
<div class="a" style="left:411px;width:120px;text-align:center;top:469.54999999999995px;line-height:12px;font-size:9.8px;color:#333;">$6,811</div>
<div class="a" style="left:411px;width:120px;text-align:center;top:484.59999999999997px;line-height:12px;font-size:9.8px;color:#333;">$3,592</div>
<div class="a" style="left:411px;width:120px;text-align:center;top:499.65px;line-height:12px;font-size:9.8px;color:#333;">$2,018</div>
<div class="a" style="left:411px;width:120px;text-align:center;top:514.7px;line-height:12px;font-size:9.8px;color:#333;">$1,169</div>
<div class="a" style="left:411px;width:120px;text-align:center;top:529.75px;line-height:12px;font-size:9.8px;color:#333;">$1,120</div>
<div class="a" style="left:547px;width:120px;text-align:center;top:424.4px;line-height:12px;font-size:9.8px;color:#fff;">$125.72</div>
<div class="a" style="left:547px;width:120px;text-align:center;top:439.45px;line-height:12px;font-size:9.8px;color:#333;">$88.23</div>
<div class="a" style="left:547px;width:120px;text-align:center;top:454.5px;line-height:12px;font-size:9.8px;color:#fff;">$120.65</div>
<div class="a" style="left:547px;width:120px;text-align:center;top:469.54999999999995px;line-height:12px;font-size:9.8px;color:#333;">$90.81</div>
<div class="a" style="left:547px;width:120px;text-align:center;top:484.59999999999997px;line-height:12px;font-size:9.8px;color:#333;">$99.77</div>
<div class="a" style="left:547px;width:120px;text-align:center;top:499.65px;line-height:12px;font-size:9.8px;color:#333;">$112.13</div>
<div class="a" style="left:547px;width:120px;text-align:center;top:514.7px;line-height:12px;font-size:9.8px;color:#333;">$89.92</div>
<div class="a" style="left:547px;width:120px;text-align:center;top:529.75px;line-height:12px;font-size:9.8px;color:#333;">$93.33</div>
<div class="a" style="left:683px;width:120px;text-align:center;top:424.4px;line-height:12px;font-size:9.8px;color:#333;">$37.58</div>
<div class="a" style="left:683px;width:120px;text-align:center;top:439.45px;line-height:12px;font-size:9.8px;color:#fff;">$46.73</div>
<div class="a" style="left:683px;width:120px;text-align:center;top:454.5px;line-height:12px;font-size:9.8px;color:#333;">$37.82</div>
<div class="a" style="left:683px;width:120px;text-align:center;top:469.54999999999995px;line-height:12px;font-size:9.8px;color:#333;">$36.42</div>
<div class="a" style="left:683px;width:120px;text-align:center;top:484.59999999999997px;line-height:12px;font-size:9.8px;color:#333;">$34.54</div>
<div class="a" style="left:683px;width:120px;text-align:center;top:499.65px;line-height:12px;font-size:9.8px;color:#333;">$34.80</div>
<div class="a" style="left:683px;width:120px;text-align:center;top:514.7px;line-height:12px;font-size:9.8px;color:#333;">$40.31</div>
<div class="a" style="left:683px;width:120px;text-align:center;top:529.75px;line-height:12px;font-size:9.8px;color:#333;">$38.62</div>
<div class="a" style="left:819px;width:120px;text-align:center;top:424.4px;line-height:12px;font-size:9.8px;color:#fff;">3.3</div>
<div class="a" style="left:819px;width:120px;text-align:center;top:439.45px;line-height:12px;font-size:9.8px;color:#333;">1.9</div>
<div class="a" style="left:819px;width:120px;text-align:center;top:454.5px;line-height:12px;font-size:9.8px;color:#fff;">3.2</div>
<div class="a" style="left:819px;width:120px;text-align:center;top:469.54999999999995px;line-height:12px;font-size:9.8px;color:#333;">2.5</div>
<div class="a" style="left:819px;width:120px;text-align:center;top:484.59999999999997px;line-height:12px;font-size:9.8px;color:#333;">2.9</div>
<div class="a" style="left:819px;width:120px;text-align:center;top:499.65px;line-height:12px;font-size:9.8px;color:#fff;">3.2</div>
<div class="a" style="left:819px;width:120px;text-align:center;top:514.7px;line-height:12px;font-size:9.8px;color:#333;">2.2</div>
<div class="a" style="left:819px;width:120px;text-align:center;top:529.75px;line-height:12px;font-size:9.8px;color:#333;">2.4</div>
<div class="a" style="left:955px;width:120px;text-align:center;top:424.4px;line-height:12px;font-size:9.8px;color:#fff;">480</div>
<div class="a" style="left:955px;width:120px;text-align:center;top:439.45px;line-height:12px;font-size:9.8px;color:#333;">128</div>
<div class="a" style="left:955px;width:120px;text-align:center;top:454.5px;line-height:12px;font-size:9.8px;color:#333;">65</div>
<div class="a" style="left:955px;width:120px;text-align:center;top:469.54999999999995px;line-height:12px;font-size:9.8px;color:#333;">66</div>
<div class="a" style="left:955px;width:120px;text-align:center;top:484.59999999999997px;line-height:12px;font-size:9.8px;color:#333;">31</div>
<div class="a" style="left:955px;width:120px;text-align:center;top:499.65px;line-height:12px;font-size:9.8px;color:#333;">15</div>
<div class="a" style="left:955px;width:120px;text-align:center;top:514.7px;line-height:12px;font-size:9.8px;color:#333;">12</div>
<div class="a" style="left:955px;width:120px;text-align:center;top:529.75px;line-height:12px;font-size:9.8px;color:#333;">11</div>
</div></body></html>
